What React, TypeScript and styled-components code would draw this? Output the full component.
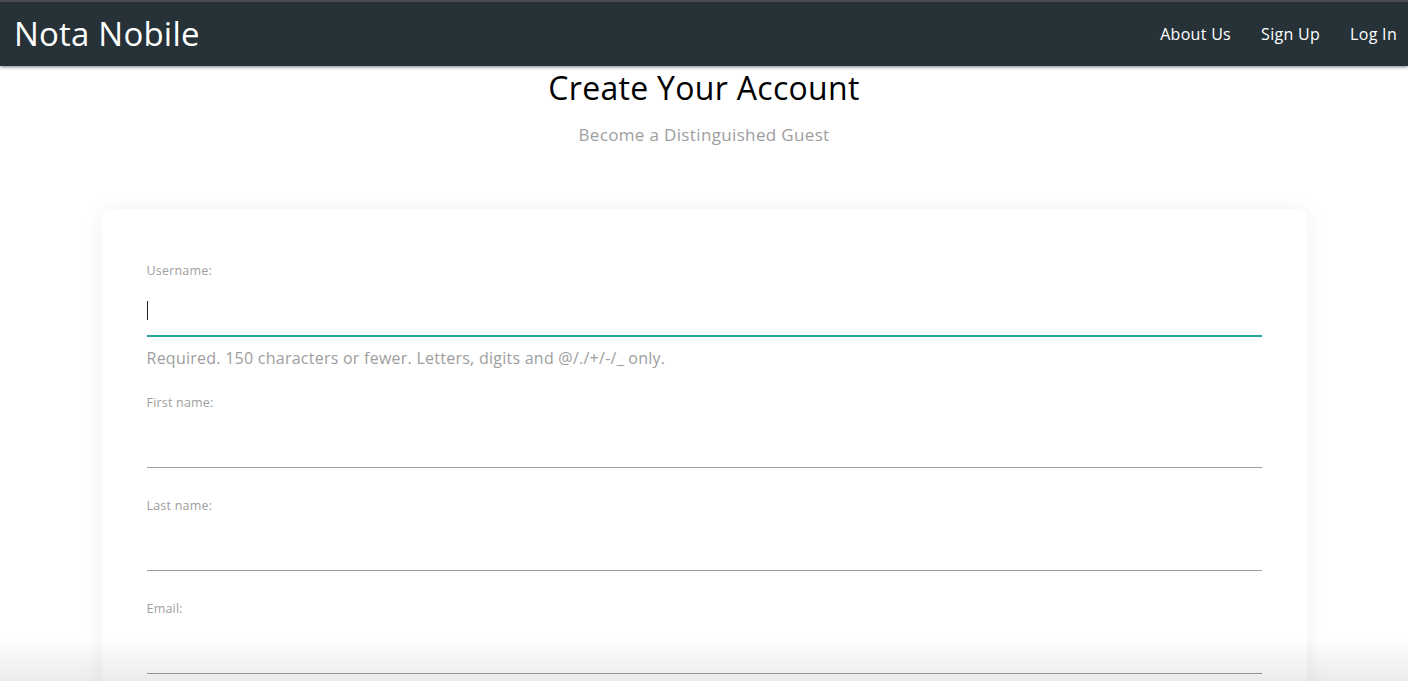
import React from "react";
import styled, { createGlobalStyle } from "styled-components";

const Global = createGlobalStyle`
  html, body { margin: 0; padding: 0; background: #fff; }
  body {
    font-family: "Open Sans", "Liberation Sans", sans-serif;
    color: rgba(0,0,0,0.87);
    overflow: hidden;
  }
  * { box-sizing: border-box; }
`;

const NavBar = styled.nav`
  height: 66px;
  border-top: 2px solid #4a4d50;
  background: #263238;
  display: flex;
  align-items: center;
  justify-content: space-between;
  padding: 0 11px 0 14px;
  box-shadow: 0 2px 2px 0 rgba(0,0,0,.14), 0 3px 1px -2px rgba(0,0,0,.12), 0 1px 5px 0 rgba(0,0,0,.2);
  position: relative;
  z-index: 2;
`;

const Brand = styled.a`
  color: #fff;
  font-size: 33px;
  line-height: 62px;
  text-decoration: none;
  letter-spacing: 0.2px;
`;

const NavLinks = styled.ul`
  display: flex;
  list-style: none;
  margin: 0;
  padding: 0;
`;

const NavItem = styled.li`
  &:last-child a { padding-right: 0; }
`;

const NavLink = styled.a`
  display: block;
  color: #fff;
  font-size: 16px;
  letter-spacing: 0.3px;
  padding: 0 15px;
  line-height: 62px;
  text-decoration: none;
`;

const Main = styled.main`
  display: flex;
  flex-direction: column;
  align-items: center;
`;

const Title = styled.h1`
  margin: 2px 0 0;
  font-size: 32px;
  font-weight: 400;
  line-height: 40px;
  letter-spacing: 0.3px;
  color: #000;
`;

const Subtitle = styled.p`
  margin: 17px 0 0;
  font-size: 17px;
  line-height: 20px;
  letter-spacing: 0.35px;
  color: #9e9e9e;
`;

const Card = styled.form`
  width: 1205px;
  margin-top: 64px;
  background: #fff;
  border-radius: 6px;
  box-shadow: 0 0 22px rgba(0,0,0,0.06);
  padding: 54px 45px 40px;
  display: flex;
  flex-direction: column;
  gap: 30px;
`;

const Field = styled.div`
  display: flex;
  flex-direction: column;
`;

const Label = styled.label`
  font-size: 12.5px;
  line-height: 16px;
  letter-spacing: 0.2px;
  color: #9e9e9e;
`;

const InputWrap = styled.div`
  position: relative;
  margin-top: 8px;
`;

const Input = styled.input<{ $active?: boolean }>`
  display: block;
  width: 100%;
  height: 49px;
  border: none;
  border-bottom: 1px solid ${(p) => (p.$active ? "#26a69a" : "#9e9e9e")};
  box-shadow: ${(p) => (p.$active ? "0 1px 0 0 #26a69a" : "none")};
  outline: none;
  background: transparent;
  font-family: inherit;
  font-size: 16px;
  padding: 0;
  caret-color: transparent;
`;

const Caret = styled.span`
  position: absolute;
  left: 0;
  top: 14px;
  width: 1px;
  height: 19px;
  background: #222;
  pointer-events: none;
`;

const Helper = styled.span`
  margin: 12px 0 -3px;
  font-size: 16px;
  line-height: 20px;
  letter-spacing: 0.25px;
  color: #9e9e9e;
`;

const BottomFade = styled.div`
  position: fixed;
  left: 0;
  right: 0;
  bottom: 0;
  height: 44px;
  pointer-events: none;
  background: linear-gradient(to bottom, rgba(0,0,0,0), rgba(0,0,0,0.08));
`;

export default function App() {
  return (
    <>
      <Global />
      <NavBar>
        <Brand href="#">Nota Nobile</Brand>
        <NavLinks>
          <NavItem><NavLink href="#">About Us</NavLink></NavItem>
          <NavItem><NavLink href="#">Sign Up</NavLink></NavItem>
          <NavItem><NavLink href="#">Log In</NavLink></NavItem>
        </NavLinks>
      </NavBar>
      <Main>
        <Title>Create Your Account</Title>
        <Subtitle>Become a Distinguished Guest</Subtitle>
        <Card onSubmit={(e) => e.preventDefault()}>
          <Field>
            <Label htmlFor="username">Username:</Label>
            <InputWrap>
              <Input id="username" $active />
              <Caret />
            </InputWrap>
            <Helper>Required. 150 characters or fewer. Letters, digits and @/./+/-/_ only.</Helper>
          </Field>
          <Field>
            <Label htmlFor="first">First name:</Label>
            <InputWrap>
              <Input id="first" />
            </InputWrap>
          </Field>
          <Field>
            <Label htmlFor="last">Last name:</Label>
            <InputWrap>
              <Input id="last" />
            </InputWrap>
          </Field>
          <Field>
            <Label htmlFor="email">Email:</Label>
            <InputWrap>
              <Input id="email" type="email" />
            </InputWrap>
          </Field>
        </Card>
      </Main>
      <BottomFade />
    </>
  );
}
